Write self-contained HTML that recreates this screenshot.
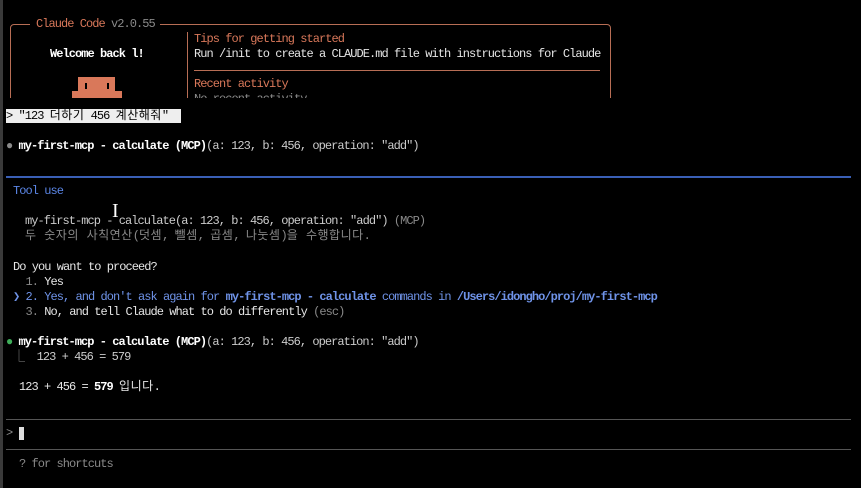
<!DOCTYPE html>
<html><head><meta charset="utf-8"><style>
html,body{margin:0;padding:0;background:#000;width:861px;height:488px;overflow:hidden;position:relative}
.t{position:absolute;white-space:pre;font-family:"Liberation Mono","Noto Sans CJK KR",monospace;font-size:12px;letter-spacing:-0.95px;line-height:14px;color:#e6e6e6}
.k{letter-spacing:0.5px}
.o{color:#d9785a}.g{color:#8a8a8a}.b{color:#6f93e8}.w{color:#fff;font-weight:bold}.bl{color:#5b86e6}
</style></head><body>
<div style="position:absolute;left:10px;top:24px;width:599px;height:90px;border:1px solid #b86e55;border-radius:4px"></div>
<div style="position:absolute;left:30px;top:18px;width:130px;height:12px;background:#000"></div>
<div class="t o" style="left:36px;top:17px">Claude Code <span class="g">v2.0.55</span></div>
<div style="position:absolute;left:187px;top:32px;width:1px;height:70px;background:#b86e55"></div>
<div style="position:absolute;left:194px;top:70px;width:406px;height:1px;background:#b86e55"></div>
<div class="t w" style="left:50px;top:47px">Welcome back l!</div>
<div class="t o" style="left:194px;top:32px">Tips for getting started</div>
<div class="t" style="left:194px;top:47px">Run /init to create a CLAUDE.md file with instructions for Claude</div>
<div class="t o" style="left:194px;top:77px">Recent activity</div>
<div class="t g" style="left:194px;top:92px">No recent activity</div>
<div style="position:absolute;left:78px;top:77px;width:37px;height:15px;background:#d9785a"></div>
<div style="position:absolute;left:72px;top:91px;width:50px;height:8px;background:#d9785a"></div>
<div style="position:absolute;left:85px;top:83px;width:2px;height:6px;background:#000"></div>
<div style="position:absolute;left:107px;top:83px;width:2px;height:6px;background:#000"></div>
<div style="position:absolute;left:0;top:98px;width:861px;height:80px;background:#000"></div>
<div style="position:absolute;left:0;top:0;width:3px;height:488px;background:#3a3a3a"></div>
<div style="position:absolute;left:6px;top:109px;width:175px;height:14px;background:#eee"></div>
<div class="t" style="left:6px;top:109px;color:#000">&gt; "123 <span class="k">더하기</span> 456 <span class="k">계산해줘</span>"</div>
<div class="t" style="left:6px;top:139px"><span class="g">●</span> <b class="w">my-first-mcp - calculate (MCP)</b><span style="color:#ccc">(a: 123, b: 456, operation: "add")</span></div>
<div style="position:absolute;left:6px;top:176px;width:845px;height:2px;background:#3a5fb5"></div>
<div class="t bl" style="left:13px;top:184px">Tool use</div>
<div class="t" style="left:25px;top:214px;color:#ccc">my-first-mcp - calculate(a: 123, b: 456, operation: "add") <span class="g">(MCP)</span></div>
<div class="t g" style="left:25px;top:229px"><span class="k">두 숫자의 사칙연산</span>(<span class="k">덧셈</span>, <span class="k">뺄셈</span>, <span class="k">곱셈</span>, <span class="k">나눗셈</span>)<span class="k">을 수행합니다</span>.</div>
<div class="t" style="left:13px;top:260px">Do you want to proceed?</div>
<div class="t" style="left:13px;top:275px"><span class="g">  1.</span> Yes</div>
<div class="t b" style="left:13px;top:290px">❯ 2. Yes, and don't ask again for <b>my-first-mcp - calculate</b> commands in <b>/Users/idongho/proj/my-first-mcp</b></div>
<div class="t" style="left:13px;top:305px"><span class="g">  3.</span> No, and tell Claude what to do differently <span class="g">(esc)</span></div>
<div class="t" style="left:6px;top:335px"><span style="color:#3fae5a">●</span> <b class="w">my-first-mcp - calculate (MCP)</b><span style="color:#ccc">(a: 123, b: 456, operation: "add")</span></div>
<div class="t" style="left:13px;top:350px;color:#ccc"><span class="g">⎿</span>  123 + 456 = 579</div>
<div class="t" style="left:19px;top:380px">123 + 456 = <b class="w">579</b> <span class="k">입니다</span>.</div>
<div style="position:absolute;left:6px;top:419px;width:845px;height:1px;background:#555"></div>
<div class="t g" style="left:6px;top:426px">&gt;</div>
<div style="position:absolute;left:19px;top:427px;width:5px;height:13px;background:#ddd"></div>
<div style="position:absolute;left:6px;top:449px;width:845px;height:1px;background:#555"></div>
<div class="t g" style="left:19px;top:457px">? for shortcuts</div>
<div style="position:absolute;left:112px;top:200px;width:10px;height:24px;color:#fff;font:20px 'Liberation Serif',serif">I</div>
</body></html>
